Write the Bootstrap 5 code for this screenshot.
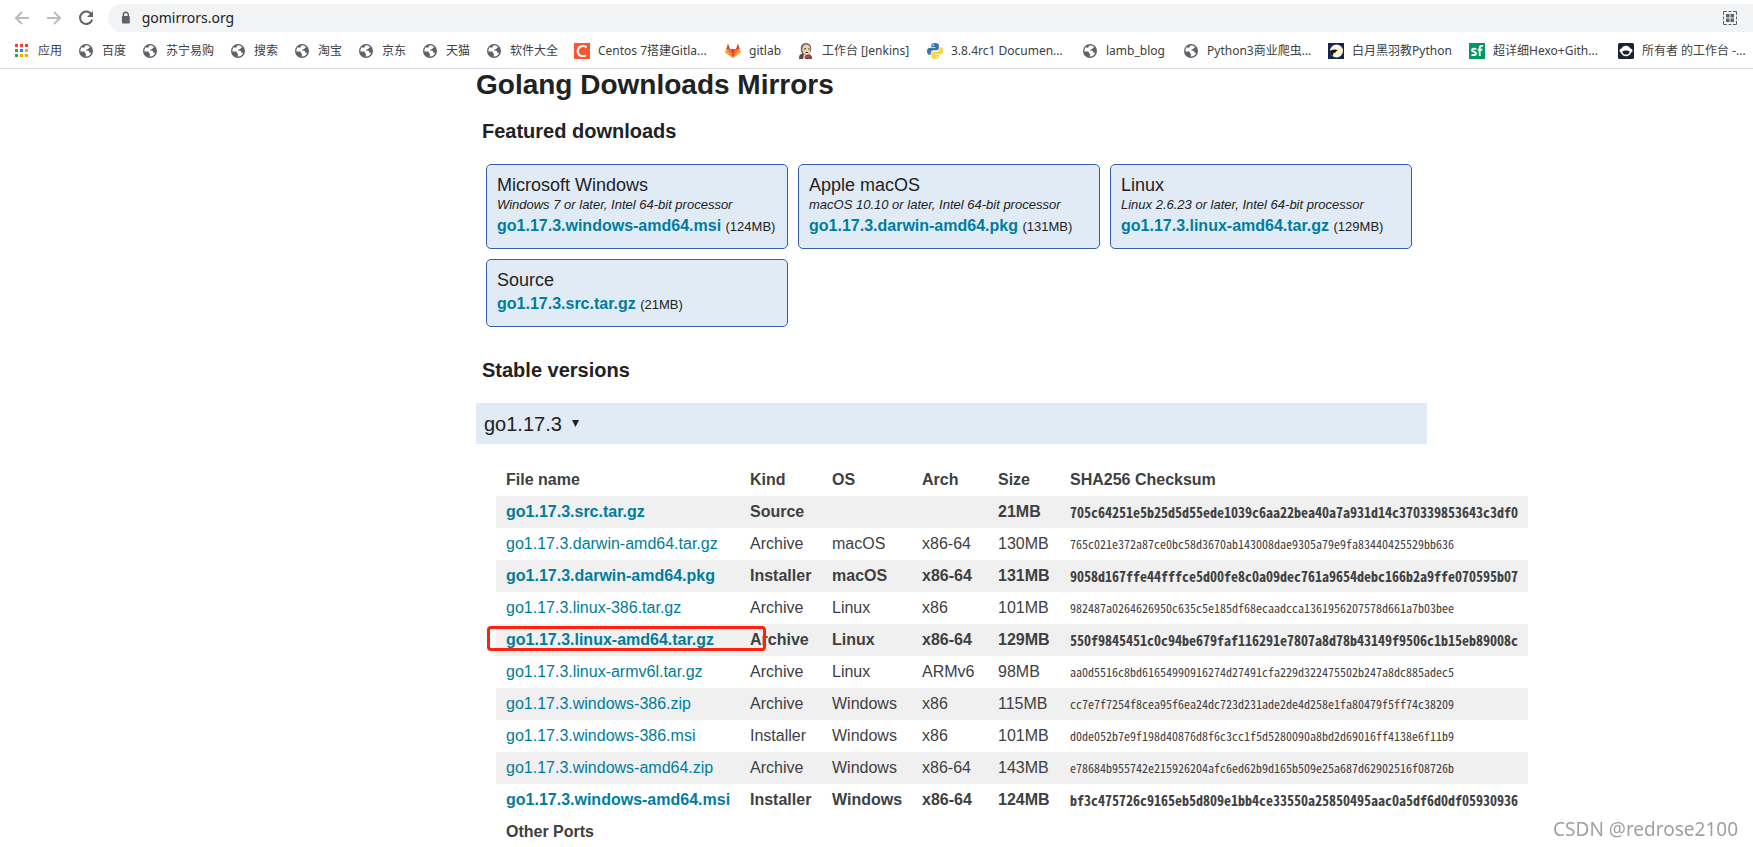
<!DOCTYPE html>
<html lang="zh-CN">
<head>
<meta charset="utf-8">
<meta name="viewport" content="width=device-width, initial-scale=1">
<title>Golang Downloads Mirrors</title>
<link rel="stylesheet" href="https://cdn.jsdelivr.net/npm/bootstrap@5.3.0/dist/css/bootstrap.min.css">
<style>
  body { font-family: "Liberation Sans", Arial, sans-serif; color: #202224; background: #fff; overflow-x: hidden; }
  a { color: #007d9c; }

  /* browser chrome */
  .chrome-bar { font-family: "Noto Sans", "Noto Sans CJK SC", sans-serif; color: #3c4043; border-bottom: 1px solid #dadce0; }
  .toolbar-row { height: 34px; padding: 4px 0 2px 12px; }
  .tool-btn { width: 20px; height: 20px; margin-right: 12px; }
  .tool-btn svg { display: block; }
  .address { height: 28px; padding: 0 16px 0 10px; background: #f1f3f4; border-radius: 14px 0 0 14px; }
  .address input { font-size: 14px; line-height: 20px; color: #202124; outline: 0; }
  .bookmarks { display: grid; height: 34px; padding: 0 0 0 14px; column-gap: 16px; align-items: center;
    grid-template-columns: 48px 48px 72px 48px 48px 48px 48px 72px 135px 57px 113px 139px 85px 129px 125px 133px 132px; }
  .bookmarks a { color: #3c4043; font-size: 12px; line-height: 18px; }
  .bookmarks svg { width: 16px; height: 16px; flex: none; }

  /* page */
  .page-grid { display: grid; grid-template-columns: 476fr 951fr 326fr; }
  .page-grid main { grid-column: 2; min-width: 0; }
  h1 { font-size: 28px; line-height: 32px; }
  h2 { font-size: 20px; line-height: 24px; padding-left: 6px; }
  #featured { margin: 18px 0 21px; }
  #stable { margin: 31px 0 21px; }
  .downloads { gap: 10px; padding: 0 0 0 10px; }
  .dl-box { width: 302px; padding: 10px; background: #e0ebf5; border: 1px solid #375eab; border-radius: 5px; color: #222; }
  .dl-box:hover .dl-file { text-decoration: underline; }
  .dl-os { font-size: 18px; line-height: 21px; }
  .dl-req { font-size: 13px; line-height: 17px; font-style: italic; }
  .dl-line { font-size: 16px; line-height: 25px; }
  .dl-file { color: #007d9c; }
  .dl-size { font-size: 13px; line-height: 1; }
  .version-toggle { height: 41px; padding: 0 8px; background: #e0ebf5; font-size: 20px; color: #222; }
  .version-toggle svg { width: 7px; height: 7px; margin-left: 10px; }

  .files { width: 1032px; margin: 20px 0 0 20px; table-layout: fixed; color: #3e4042; font-size: 16px; line-height: 32px; white-space: nowrap; }
  .files th, .files td { padding: 0 10px; }
  .files tbody tr:nth-child(odd):not(.ports) { background: #f0f0f0; }
  .files .ports { line-height: 31px; }
  .files a { text-decoration: none; }
  .files .sum { font-family: "Noto Sans CJK JP", monospace; font-feature-settings: "hwid"; font-variant-ligatures: none; font-size: 12px; line-height: 16px; vertical-align: middle; }
  .files .fw-bold .sum { font-size: 14px; }
  .marker { left: -9px; top: 2px; width: 279px; height: 25px; border: 3px solid #ff2010; border-radius: 4px; pointer-events: none; }
  .watermark { right: 15px; bottom: 5px; font-family: "Noto Sans", sans-serif; font-size: 19px; line-height: 26px; color: #a0a0a0; }
</style>
</head>
<body>

<svg class="d-none" aria-hidden="true">
  <symbol id="globe" viewBox="0 0 16 16">
    <circle cx="8" cy="8" r="7" fill="#5f6368"/>
    <path fill="#fff" d="M7.6 2.6c1.6-.6 3.2.1 4.2 1.2.3.6-.2 1.3-1 1.4-.5.1-.5.9-1.1 1-.9.2-1.3.2-1.5.9-.1.6.4.7 1.3.7 1 0 1.600.4 1.800 1.200.1.7.7.9 1.400.9.500 0 .6.2.3.7a5.600 5.600 0 0 1-5.200 3c-.4-.3-.3-1.100.2-1.600.4-.5.3-1-.3-1.300-.7-.3-.9-.8-.9-1.500 0-.5-.4-.8-1-.8H2.500c-.3-1.500.2-3.200 1.300-4.300.9 1.100 2.200.9 2.700.1.3-.6.2-1.300 1.100-1.600z"/>
  </symbol>
</svg>

<header class="chrome-bar">
  <div class="toolbar-row d-flex align-items-center">
    <button class="tool-btn btn p-0 border-0" type="button" aria-label="Back"><svg width="20" height="20" viewBox="0 0 20 20" fill="none" stroke="#babcbe" stroke-width="2"><path d="M17 10H4M10 4l-6 6 6 6"/></svg></button>
    <button class="tool-btn btn p-0 border-0" type="button" aria-label="Forward"><svg width="20" height="20" viewBox="0 0 20 20" fill="none" stroke="#babcbe" stroke-width="2"><path d="M3 10h13M10 4l6 6-6 6"/></svg></button>
    <button class="tool-btn btn p-0 border-0" type="button" aria-label="Reload"><svg width="20" height="20" viewBox="0 0 20 20"><path d="M15.500 6.500A6.200 6.200 0 1 0 16.200 11.500" fill="none" stroke="#5f6368" stroke-width="2"/><path fill="#5f6368" d="M17 3v6h-6z"/></svg></button>
    <div class="address flex-grow-1 d-flex align-items-center">
      <svg width="16" height="16" viewBox="0 0 16 16" aria-hidden="true"><path d="M5.500 7V4.600a2.500 2.500 0 0 1 5 0V7" fill="none" stroke="#5f6368" stroke-width="1.500"/><rect x="4" y="6" width="8" height="7.500" rx="1" fill="#5f6368"/></svg>
      <input class="form-control-plaintext flex-grow-1 border-0 py-0 ps-2" type="text" aria-label="Address" value="gomirrors.org">
      <button class="btn p-0 border-0" type="button" aria-label="QR code"><svg class="d-block" width="14" height="14" viewBox="0 0 14 14"><path d="M4 .5H.5V4M10 .5h3.500V4M4 13.500H.5V10M10 13.500h3.500V10M.5 5.500v3M13.500 5.500v3M5.500.5h3M5.500 13.500h3" fill="none" stroke="#5f6368"/><path fill="#5f6368" d="M3 3h3.500v3.500H3zM7.500 3H11v3.500H7.500zM3 7.500h3.500V11H3zM7.500 7.500H11V11H7.500z"/></svg></button>
    </div>
  </div>
  <nav class="bookmarks" aria-label="Bookmarks">
    <a href="#" class="d-flex align-items-center gap-2 text-nowrap text-decoration-none"><svg viewBox="0 0 16 16"><path fill="#ea4335" d="M1 1h3v3H1zM6 1h3v3H6zM11 1h3v3h-3z"/><path fill="#34a060" d="M1 6h3v3H1zM1 11h3v3H1z"/><path fill="#1a84f5" d="M6 6h3v3H6z"/><path fill="#f9ab00" d="M11 6h3v3h-3zM6 11h3v3H6zM11 11h3v3h-3z"/></svg><span>应用</span></a>
    <a href="#" class="d-flex align-items-center gap-2 text-nowrap text-decoration-none"><svg><use href="#globe"/></svg><span>百度</span></a>
    <a href="#" class="d-flex align-items-center gap-2 text-nowrap text-decoration-none"><svg><use href="#globe"/></svg><span>苏宁易购</span></a>
    <a href="#" class="d-flex align-items-center gap-2 text-nowrap text-decoration-none"><svg><use href="#globe"/></svg><span>搜索</span></a>
    <a href="#" class="d-flex align-items-center gap-2 text-nowrap text-decoration-none"><svg><use href="#globe"/></svg><span>淘宝</span></a>
    <a href="#" class="d-flex align-items-center gap-2 text-nowrap text-decoration-none"><svg><use href="#globe"/></svg><span>京东</span></a>
    <a href="#" class="d-flex align-items-center gap-2 text-nowrap text-decoration-none"><svg><use href="#globe"/></svg><span>天猫</span></a>
    <a href="#" class="d-flex align-items-center gap-2 text-nowrap text-decoration-none"><svg><use href="#globe"/></svg><span>软件大全</span></a>
    <a href="#" class="d-flex align-items-center gap-2 text-nowrap text-decoration-none"><svg viewBox="0 0 16 16"><path fill="#fc5531" d="M0 0h16v16H0z"/><path d="M12.600 4.200C9 2 3.800 3.200 3.700 8.200c0 4.600 4.300 5.800 8.300 4.100" fill="none" stroke="#fff" stroke-width="2"/></svg><span>Centos 7搭建Gitla...</span></a>
    <a href="#" class="d-flex align-items-center gap-2 text-nowrap text-decoration-none"><svg viewBox="0 0 16 16"><path fill="#fca326" d="M1.200 6 0 9.400 8 15.200zM14.800 6 16 9.400 8 15.200z"/><path fill="#fc6d26" d="M1.200 6h3.900L8 15.200zM14.800 6h-3.900L8 15.200z"/><path fill="#e24329" d="M5.100 6h5.800L8 15.200zM3 .6 1.200 6h3.900zM13 .6 10.900 6h3.900z"/></svg><span>gitlab</span></a>
    <a href="#" class="d-flex align-items-center gap-2 text-nowrap text-decoration-none"><svg viewBox="0 0 16 16"><path fill="#4d4a4a" d="M1 16c0-4 1-5 3-5h6c3 .5 4 2 4 5H1z"/><path fill="#716858" d="M3 8C2 3 4 0 8 0c4 .2 6 3 5 8l-2 3H4z"/><path fill="#ecd0b0" d="M4.200 6C5 2 7 1.300 9 1.700c3 .4 3.500 3 3.200 5.800-.2 3-1.700 4.500-3.500 4.500C6 12 4.500 9 4.200 6z"/><path d="M6 5.800h2M10 6h1.500M7.500 9.500h2.500" stroke="#4d3b30"/><path fill="#fff" d="m6 11 3 3-2 2H5z"/><path fill="#d33833" d="m6.500 12.500 2.500 1 3-1.500v4l-3-1-2.500 1z"/></svg><span>工作台 [Jenkins]</span></a>
    <a href="#" class="d-flex align-items-center gap-2 text-nowrap text-decoration-none"><svg viewBox="0 0 16 16"><path fill="#3776ab" d="M8 0C5 0 4.300 1 4.300 2.500V4h4v.7H2.500C1 4.700 0 6 0 8.200s1 3.600 2.300 3.600h1.500v-2c0-1.500 1-2.500 2.500-2.500h3.500c1.200 0 2.100-1 2.100-2.200V2.500C11.900.8 10.500 0 8 0z"/><path fill="#ffd43b" d="M8.200 16c3 0 3.700-1 3.700-2.500V12h-4v-.7h5.800C15.200 11.300 16 10 16 7.800s-.9-3.600-2.200-3.600h-1.300v2c0 1.500-1 2.500-2.500 2.500H6.400c-1.200 0-2.100 1-2.100 2.200v2.600c0 1.700 1.400 2.500 3.900 2.500z"/><circle cx="6.200" cy="2" r=".8" fill="#fff"/><circle cx="9.900" cy="14" r=".8" fill="#fff"/></svg><span>3.8.4rc1 Documen...</span></a>
    <a href="#" class="d-flex align-items-center gap-2 text-nowrap text-decoration-none"><svg><use href="#globe"/></svg><span>lamb_blog</span></a>
    <a href="#" class="d-flex align-items-center gap-2 text-nowrap text-decoration-none"><svg><use href="#globe"/></svg><span>Python3商业爬虫...</span></a>
    <a href="#" class="d-flex align-items-center gap-2 text-nowrap text-decoration-none"><svg viewBox="0 0 16 16"><path fill="#172650" d="M0 0h16v16H0z"/><circle cx="8.500" cy="8" r="6.500" fill="#fff6d8"/><path fill="#1c1414" d="M2 8c1.500-1.500 3-.5 4-1.500 1.500 0 2.500.5 4 .5L8 8.500 7 10l-1.500-.5L5 13c-2-1-3-3-3-5z"/></svg><span>白月黑羽教Python</span></a>
    <a href="#" class="d-flex align-items-center gap-2 text-nowrap text-decoration-none"><svg viewBox="0 0 16 16"><path fill="#009a61" d="M0 0h16v16H0z"/><path d="M7.300 6.200C5.500 5.300 3 5.500 3 7.200c0 2 4 1.100 4 3.200 0 1.900-2.700 2-4.500 1.200M14 3.200c-2-.7-3.300 0-3.300 2V13M8.700 6.700h4.600" fill="none" stroke="#fff" stroke-width="1.900"/></svg><span>超详细Hexo+Gith...</span></a>
    <a href="#" class="d-flex align-items-center gap-2 text-nowrap text-decoration-none"><svg viewBox="0 0 16 16"><rect width="16" height="16" rx="1.500" fill="#1c2333"/><path fill="#fff" d="M8 2.800c2 0 3.500 1 4.300 2.800 1.700.4 2.200 1.200 2.200 2.200 0 .8-.5 1.500-1.400 1.800C12.300 12 10.500 13.200 8 13.200S3.700 12 2.900 9.600C2 9.300 1.500 8.600 1.500 7.800c0-1 .5-1.800 2.200-2.200C4.500 3.800 6 2.800 8 2.800z"/><path fill="#1c2333" d="M4.500 8.200C6 7.200 10 7.200 11.500 8.200c.3 2-1.300 3.400-3.500 3.400S4.200 10.200 4.500 8.200z"/></svg><span>所有者 的工作台 -...</span></a>
  </nav>
</header>

<div class="page-grid">
  <main>
    <h1 class="fw-bold m-0">Golang Downloads Mirrors</h1>
    <h2 class="fw-bold" id="featured">Featured downloads</h2>
    <div class="downloads d-flex flex-wrap">
      <a class="dl-box text-decoration-none" href="#">
        <div class="dl-os">Microsoft Windows</div>
        <div class="dl-req">Windows 7 or later, Intel 64-bit processor</div>
        <div class="dl-line"><span class="dl-file fw-bold">go1.17.3.windows-amd64.msi</span> <span class="dl-size">(124MB)</span></div>
      </a>
      <a class="dl-box text-decoration-none" href="#">
        <div class="dl-os">Apple macOS</div>
        <div class="dl-req">macOS 10.10 or later, Intel 64-bit processor</div>
        <div class="dl-line"><span class="dl-file fw-bold">go1.17.3.darwin-amd64.pkg</span> <span class="dl-size">(131MB)</span></div>
      </a>
      <a class="dl-box text-decoration-none" href="#">
        <div class="dl-os">Linux</div>
        <div class="dl-req">Linux 2.6.23 or later, Intel 64-bit processor</div>
        <div class="dl-line"><span class="dl-file fw-bold">go1.17.3.linux-amd64.tar.gz</span> <span class="dl-size">(129MB)</span></div>
      </a>
      <a class="dl-box text-decoration-none" href="#">
        <div class="dl-os">Source</div>
        <div class="dl-line"><span class="dl-file fw-bold">go1.17.3.src.tar.gz</span> <span class="dl-size">(21MB)</span></div>
      </a>
    </div>
    <h2 class="fw-bold" id="stable">Stable versions</h2>
    <button class="version-toggle w-100 border-0 text-start d-flex align-items-center" type="button" aria-expanded="true">go1.17.3<svg viewBox="0 0 7 7" aria-hidden="true"><path fill="#222" d="M0 0h7L3.500 7z"/></svg></button>
    <table class="files">
      <colgroup><col style="width:244px"><col style="width:82px"><col style="width:90px"><col style="width:76px"><col style="width:72px"><col style="width:468px"></colgroup>
      <thead>
        <tr><th>File name</th><th>Kind</th><th>OS</th><th>Arch</th><th>Size</th><th>SHA256 Checksum</th></tr>
      </thead>
      <tbody>
        <tr class="fw-bold"><td><a href="#">go1.17.3.src.tar.gz</a></td><td>Source</td><td></td><td></td><td>21MB</td><td class="sum">705c64251e5b25d5d55ede1039c6aa22bea40a7a931d14c370339853643c3df0</td></tr>
        <tr><td><a href="#">go1.17.3.darwin-amd64.tar.gz</a></td><td>Archive</td><td>macOS</td><td>x86-64</td><td>130MB</td><td class="sum">765c021e372a87ce0bc58d3670ab143008dae9305a79e9fa83440425529bb636</td></tr>
        <tr class="fw-bold"><td><a href="#">go1.17.3.darwin-amd64.pkg</a></td><td>Installer</td><td>macOS</td><td>x86-64</td><td>131MB</td><td class="sum">9058d167ffe44fffce5d00fe8c0a09dec761a9654debc166b2a9ffe070595b07</td></tr>
        <tr><td><a href="#">go1.17.3.linux-386.tar.gz</a></td><td>Archive</td><td>Linux</td><td>x86</td><td>101MB</td><td class="sum">982487a0264626950c635c5e185df68ecaadcca1361956207578d661a7b03bee</td></tr>
        <tr class="fw-bold"><td class="position-relative"><a href="#">go1.17.3.linux-amd64.tar.gz</a><span class="marker position-absolute"></span></td><td>Archive</td><td>Linux</td><td>x86-64</td><td>129MB</td><td class="sum">550f9845451c0c94be679faf116291e7807a8d78b43149f9506c1b15eb89008c</td></tr>
        <tr><td><a href="#">go1.17.3.linux-armv6l.tar.gz</a></td><td>Archive</td><td>Linux</td><td>ARMv6</td><td>98MB</td><td class="sum">aa0d5516c8bd61654990916274d27491cfa229d322475502b247a8dc885adec5</td></tr>
        <tr><td><a href="#">go1.17.3.windows-386.zip</a></td><td>Archive</td><td>Windows</td><td>x86</td><td>115MB</td><td class="sum">cc7e7f7254f8cea95f6ea24dc723d231ade2de4d258e1fa80479f5ff74c38209</td></tr>
        <tr><td><a href="#">go1.17.3.windows-386.msi</a></td><td>Installer</td><td>Windows</td><td>x86</td><td>101MB</td><td class="sum">d0de052b7e9f198d40876d8f6c3cc1f5d5280090a8bd2d69016ff4138e6f11b9</td></tr>
        <tr><td><a href="#">go1.17.3.windows-amd64.zip</a></td><td>Archive</td><td>Windows</td><td>x86-64</td><td>143MB</td><td class="sum">e78684b955742e215926204afc6ed62b9d165b509e25a687d62902516f08726b</td></tr>
        <tr class="fw-bold"><td><a href="#">go1.17.3.windows-amd64.msi</a></td><td>Installer</td><td>Windows</td><td>x86-64</td><td>124MB</td><td class="sum">bf3c475726c9165eb5d809e1bb4ce33550a25850495aac0a5df6d0df05930936</td></tr>
        <tr class="ports"><th colspan="6">Other Ports</th></tr>
      </tbody>
    </table>
  </main>
</div>
<div class="watermark position-fixed">CSDN @redrose2100</div>
<script src="https://cdn.jsdelivr.net/npm/bootstrap@5.3.0/dist/js/bootstrap.bundle.min.js"></script>
</body>
</html>
